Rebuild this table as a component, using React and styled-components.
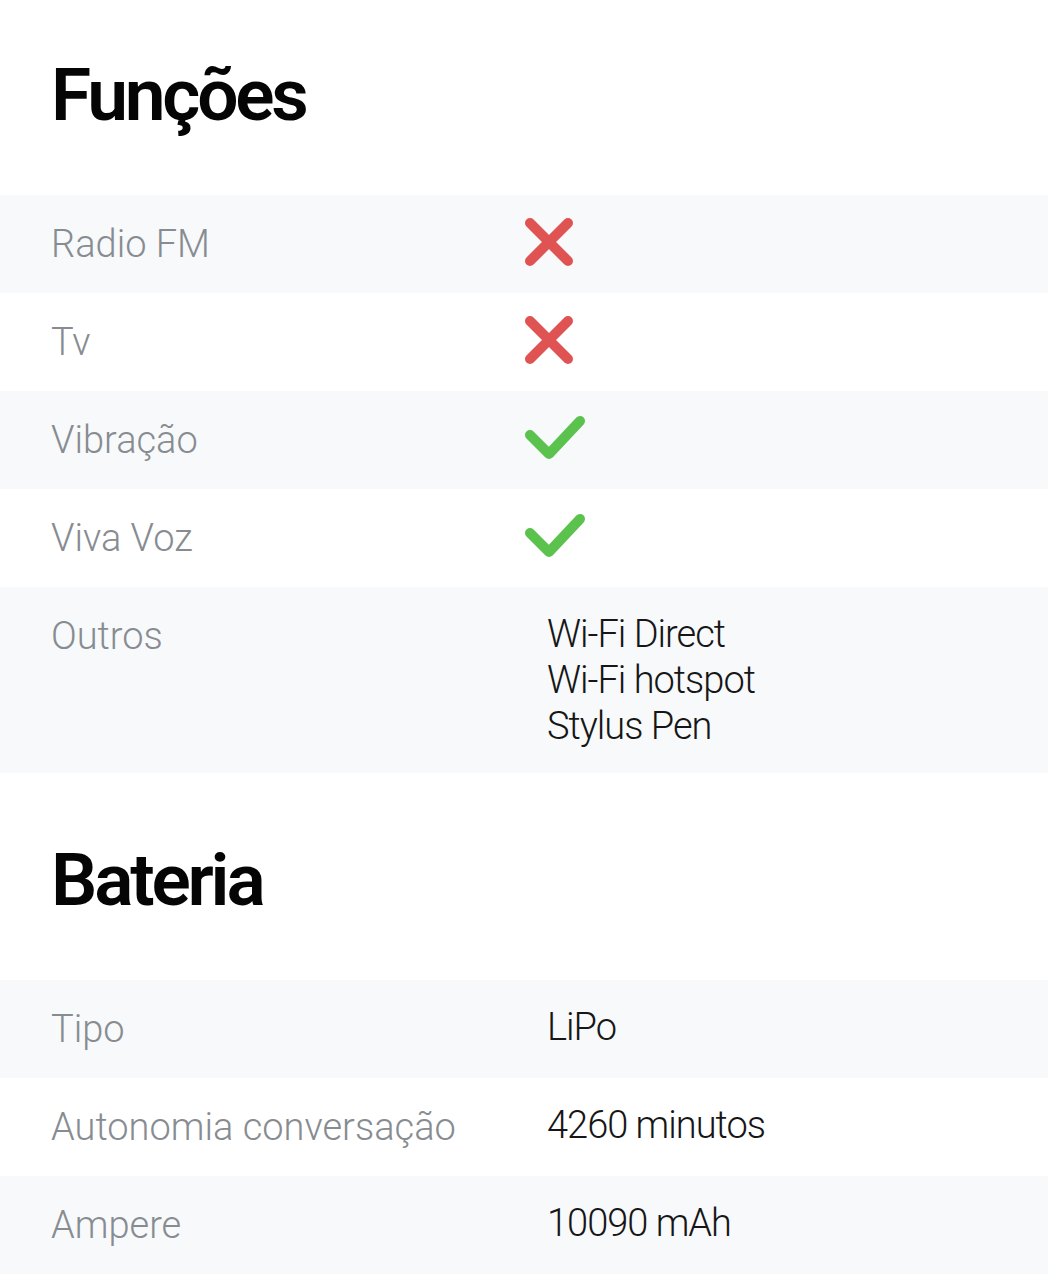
import React from "react";
import styled, { createGlobalStyle } from "styled-components";

const Global = createGlobalStyle`
  html, body { margin: 0; padding: 0; background: #ffffff; }
  body { font-family: Roboto, "Noto Sans", "Liberation Sans", sans-serif; }
`;

const Page = styled.div`
  display: flex;
  flex-direction: column;
  padding-top: 45px;
`;

const Section = styled.section`
  display: flex;
  flex-direction: column;
  margin-bottom: 57px;
`;

const Heading = styled.h2`
  margin: 0 0 50px;
  padding-left: 51px;
  font-family: Roboto, "Liberation Sans", sans-serif;
  font-weight: 600;
  font-size: 73px;
  letter-spacing: -3.2px;
  line-height: 100px;
  color: #050505;
`;

const Row = styled.div`
  display: grid;
  grid-template-columns: 496px 1fr;
  padding: 24px 0 24px 51px;
  background: ${(p) => (p.$shaded ? "#f8f9fb" : "#ffffff")};
`;

const Label = styled.div`
  font-family: Roboto, "Liberation Sans", sans-serif;
  font-weight: 300;
  font-size: 38px;
  line-height: 50px;
  letter-spacing: 0;
  color: #878c91;
`;

const Value = styled.div`
  display: flex;
  flex-direction: column;
  font-family: Roboto, "Liberation Sans", sans-serif;
  font-weight: 300;
  font-size: 38px;
  line-height: 46px;
  letter-spacing: -1px;
  color: #161616;
`;

const IconBox = styled.div`
  display: flex;
  align-items: center;
  height: 46px;
  margin-left: -23px;
`;

const Cross = () => (
  <svg width="50" height="50" viewBox="0 0 50 50">
    <path d="M6 6 L44 44 M44 6 L6 44" stroke="#e05353" strokeWidth="10" strokeLinecap="round" fill="none" />
  </svg>
);

const Check = () => (
  <svg width="62" height="50" viewBox="0 0 62 50">
    <path d="M6 22 L25 41 L56 8" stroke="#5cc24e" strokeWidth="10" strokeLinecap="round" strokeLinejoin="round" fill="none" />
  </svg>
);

const funcoes = [
  { label: "Radio FM", icon: "no" },
  { label: "Tv", icon: "no" },
  { label: "Vibração", icon: "yes" },
  { label: "Viva Voz", icon: "yes" },
  { label: "Outros", lines: ["Wi-Fi Direct", "Wi-Fi hotspot", "Stylus Pen"] },
];

const bateria = [
  { label: "Tipo", lines: ["LiPo"] },
  { label: "Autonomia conversação", lines: ["4260 minutos"] },
  { label: "Ampere", lines: ["10090 mAh"] },
];

function Table({ rows }) {
  return rows.map((r, i) => (
    <Row key={r.label} $shaded={i % 2 === 0}>
      <Label>{r.label}</Label>
      <Value>
        {r.icon ? (
          <IconBox>{r.icon === "yes" ? <Check /> : <Cross />}</IconBox>
        ) : (
          r.lines.map((l) => <span key={l}>{l}</span>)
        )}
      </Value>
    </Row>
  ));
}

export default function App() {
  return (
    <Page>
      <Global />
      <Section>
        <Heading>Funções</Heading>
        <Table rows={funcoes} />
      </Section>
      <Section>
        <Heading>Bateria</Heading>
        <Table rows={bateria} />
      </Section>
    </Page>
  );
}
